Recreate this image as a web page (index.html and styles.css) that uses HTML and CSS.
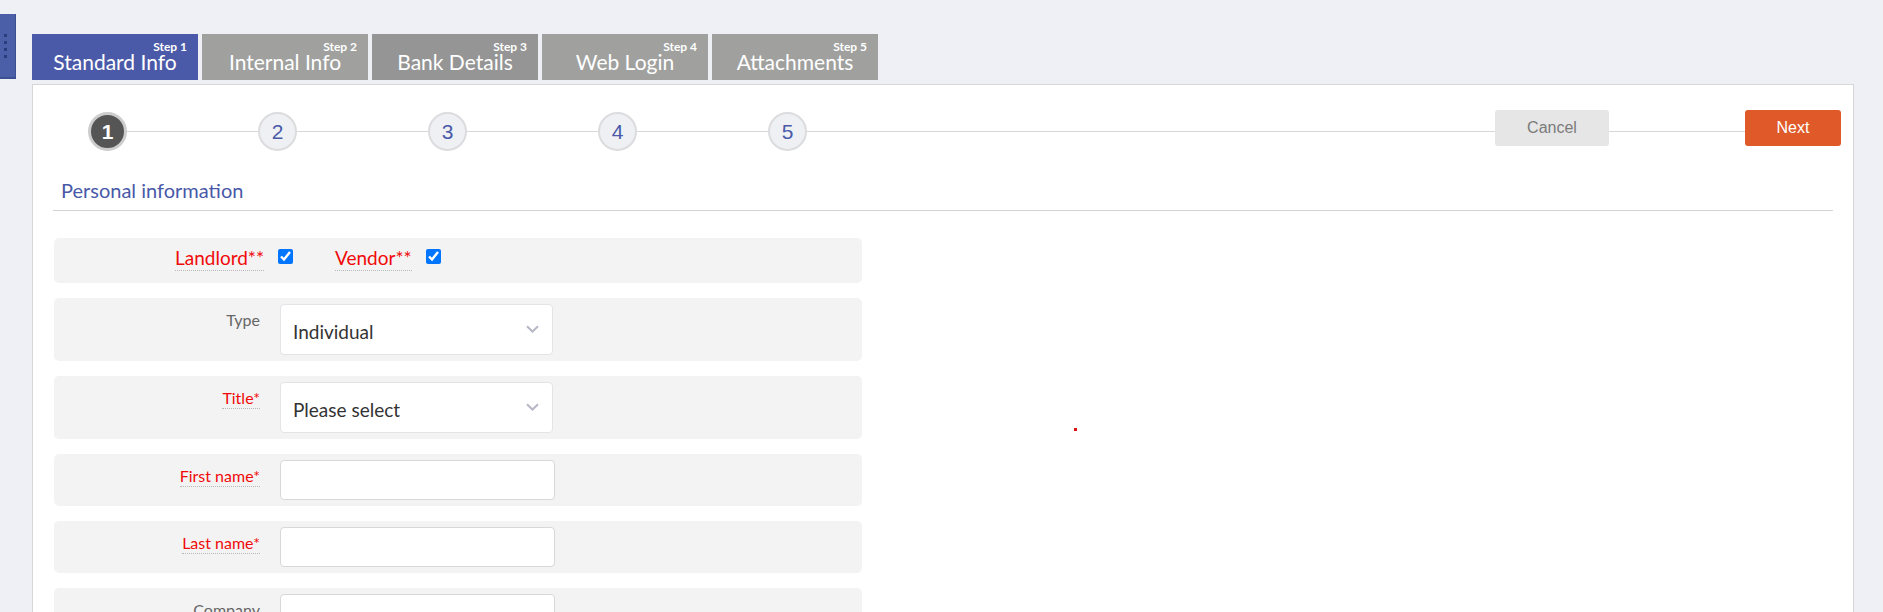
FILE: index.html
```html
<!DOCTYPE html>
<html lang="en">
<head>
<meta charset="utf-8">
<title>Landlord wizard</title>
<link rel="stylesheet" href="styles.css">
</head>
<body>
<div class="app">
  <div class="side-handle">
    <span class="grip"></span><span class="grip"></span><span class="grip"></span><span class="grip"></span>
  </div>
  <main class="wizard">
    <nav class="tabs">
      <div class="tab tab-active"><span class="tab-step">Step 1</span><span class="tab-title">Standard Info</span></div>
      <div class="tab"><span class="tab-step">Step 2</span><span class="tab-title">Internal Info</span></div>
      <div class="tab tab-hover"><span class="tab-step">Step 3</span><span class="tab-title">Bank Details</span></div>
      <div class="tab"><span class="tab-step">Step 4</span><span class="tab-title">Web Login</span></div>
      <div class="tab"><span class="tab-step">Step 5</span><span class="tab-title">Attachments</span></div>
    </nav>
    <section class="panel">
      <div class="stepper">
        <span class="step step-current">1</span><span class="connector"></span>
        <span class="step">2</span><span class="connector"></span>
        <span class="step">3</span><span class="connector"></span>
        <span class="step">4</span><span class="connector"></span>
        <span class="step">5</span><span class="connector connector-grow"></span>
        <button class="btn btn-cancel" type="button">Cancel</button><span class="connector connector-btn"></span>
        <button class="btn btn-next" type="button">Next</button>
      </div>
      <div class="form-section">
        <h2 class="section-title">Personal information</h2>

        <div class="form-row row-roles">
          <span class="role-first"><span class="role-label req-label">Landlord**</span></span>
          <input class="role-check" type="checkbox" checked>
          <span class="role-label role-second req-label">Vendor**</span>
          <input class="role-check" type="checkbox" checked>
        </div>

        <div class="form-row row-select">
          <div class="field-label"><span>Type</span></div>
          <div class="select-box"><span class="select-value">Individual</span>
            <svg class="chevron" width="13" height="8" viewBox="0 0 13 8"><path d="M1 1.2 L6.5 6.5 L12 1.2" fill="none" stroke="#b7b7c6" stroke-width="2"/></svg>
          </div>
        </div>

        <div class="form-row row-select">
          <div class="field-label"><span class="req-label">Title*</span></div>
          <div class="select-box"><span class="select-value">Please select</span>
            <svg class="chevron" width="13" height="8" viewBox="0 0 13 8"><path d="M1 1.2 L6.5 6.5 L12 1.2" fill="none" stroke="#b7b7c6" stroke-width="2"/></svg>
          </div>
        </div>

        <div class="form-row">
          <div class="field-label"><span class="req-label">First name*</span></div>
          <input class="text-input" type="text">
        </div>

        <div class="form-row">
          <div class="field-label"><span class="req-label">Last name*</span></div>
          <input class="text-input" type="text">
        </div>

        <div class="form-row">
          <div class="field-label"><span>Company</span></div>
          <input class="text-input" type="text">
        </div>
      </div>
      <span class="stray-dot"></span>
    </section>
  </main>
</div>
</body>
</html>
```

FILE: styles.css
```css
* { box-sizing: border-box; }

html, body {
  margin: 0;
  padding: 0;
}

body {
  background: #eff0f5;
  font-family: Lato, "Open Sans", sans-serif;
  color: #333;
}

.app {
  display: flex;
  align-items: flex-start;
}

.side-handle {
  width: 16px;
  height: 65px;
  margin-top: 14px;
  flex: none;
  background: #4a5fa8;
  border-right: 1px solid #3b4f93;
  border-bottom: 2px solid #3b4f93;
  display: flex;
  flex-direction: column;
  align-items: center;
  justify-content: center;
  gap: 4px;
  padding-right: 4px;
}

.grip {
  width: 3px;
  height: 3px;
  background: #2b3c7c;
}

.wizard {
  flex: 1;
  margin-left: 16px;
  margin-right: 29px;
  padding-top: 34px;
}

.tabs {
  display: flex;
  gap: 4px;
  margin-bottom: 4px;
}

.tab {
  width: 166px;
  height: 46px;
  background: #a0a19e;
  color: #fff;
  display: flex;
  flex-direction: column;
  padding-top: 7px;
}

.tab-active { background: #4a5aa8; }
.tab-hover { background: #959595; }

.tab-step {
  align-self: flex-end;
  padding-right: 11px;
  font-size: 12px;
  font-weight: 700;
  line-height: 12px;
}

.tab-title {
  text-align: center;
  font-size: 21px;
  line-height: 18px;
}

.panel {
  position: relative;
  background: #fff;
  border: 1px solid #d6d6d6;
  min-height: 560px;
}

.stepper {
  display: flex;
  align-items: center;
  margin-top: 27px;
  padding-left: 55px;
  padding-right: 12px;
}

.step {
  width: 39px;
  height: 39px;
  flex: none;
  border-radius: 50%;
  background: #eef0f4;
  border: 2px solid #dcdcdf;
  color: #4a5aa8;
  font-family: "Liberation Sans", Arial, sans-serif;
  font-size: 21px;
  display: flex;
  align-items: center;
  justify-content: center;
}

.step-current {
  background: #555;
  border: 3px solid #cdcdcd;
  color: #fff;
  font-weight: 700;
}

.connector {
  height: 1px;
  width: 131px;
  flex: none;
  background: #d8d8d8;
}

.connector-grow { flex: 1; }
.connector-btn { width: 136px; }

.btn {
  height: 36px;
  border: none;
  border-radius: 3px;
  font-family: "Liberation Sans", Arial, sans-serif;
  font-size: 16px;
  align-self: flex-start;
  margin-top: -2px;
  flex: none;
}

.btn-cancel {
  width: 114px;
  background: #e6e6e6;
  color: #7b7b7b;
}

.btn-next {
  width: 96px;
  background: #df5a28;
  color: #fff;
}

.form-section {
  padding: 0 20px;
}

.section-title {
  margin: 26px 0 27px 0;
  padding: 0 0 7px 8px;
  font-size: 20px;
  line-height: 26px;
  font-weight: 400;
  color: #4859a8;
  border-bottom: 1px solid #d3d3d3;
}

.form-row {
  width: 808px;
  margin-left: 1px;
  margin-bottom: 15px;
  background: #f3f3f3;
  border-radius: 5px;
  padding: 6px 0;
  display: grid;
  grid-template-columns: 206px 275px;
  column-gap: 20px;
  align-items: start;
}

.row-roles {
  display: flex;
  align-items: flex-start;
  column-gap: 0;
  padding: 8px 0 12px 0;
}

.role-label {
  font-size: 19px;
  line-height: 24px;
}

.role-first {
  width: 210px;
  display: flex;
  justify-content: flex-end;
}

.role-second { margin-left: 42px; }

.role-check {
  width: 15px;
  height: 15px;
  margin: 3px 0 0 14px;
}

.req-label {
  color: #f00a0a;
  border-bottom: 1px dotted #b8b8b8;
}

.field-label {
  text-align: right;
  padding-top: 6px;
  font-size: 16px;
  line-height: 20px;
  color: #666;
}

.field-label span {
  display: inline-block;
}

.select-box {
  width: 273px;
  height: 51px;
  background: #fff;
  border: 1px solid #e3e3e8;
  border-radius: 4px;
  display: flex;
  align-items: center;
  justify-content: space-between;
  padding: 3px 13px 0 12px;
}

.select-value {
  font-size: 19px;
  color: #333;
}

.chevron { flex: none; margin-top: -4px; }

.text-input {
  width: 275px;
  height: 40px;
  background: #fff;
  border: 1px solid #d8d8d8;
  border-radius: 4px;
  margin: 0;
  font-family: inherit;
}

.stray-dot {
  position: absolute;
  left: 1041px;
  top: 343px;
  width: 3px;
  height: 3px;
  background: #e01010;
}
```
